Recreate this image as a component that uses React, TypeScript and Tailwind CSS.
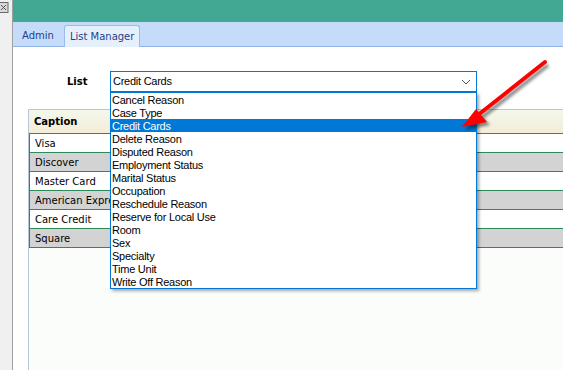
import React from "react";

const items = [
  "Cancel Reason",
  "Case Type",
  "Credit Cards",
  "Delete Reason",
  "Disputed Reason",
  "Employment Status",
  "Marital Status",
  "Occupation",
  "Reschedule Reason",
  "Reserve for Local Use",
  "Room",
  "Sex",
  "Specialty",
  "Time Unit",
  "Write Off Reason",
];

const rows = ["Visa", "Discover", "Master Card", "American Express", "Care Credit", "Square"];

export default function App() {
  return (
    <div className="relative flex w-[563px] h-[370px] overflow-hidden bg-white" style={{ fontFamily: '"DejaVu Sans", Verdana, sans-serif' }}>
      {/* left strip */}
      <div className="w-[13px] h-full bg-[#f0f0f0] border-r border-[#a0a0a0] shrink-0 relative">
        <svg width="9" height="12" viewBox="0 0 9 12" className="absolute left-0 top-[2px]">
          <rect x="-1" y="0.5" width="9" height="10" fill="#d8d8d8" stroke="#6a6a6a" />
          <path d="M1 3 L6 8 M6 3 L1 8" stroke="#555" strokeWidth="1" />
        </svg>
      </div>
      {/* main */}
      <div className="flex-1 flex flex-col min-w-0">
        <div className="h-[22px] bg-[#40a893] shrink-0" />
        <div className="h-[25px] bg-[#c4dcf9] border-b border-[#8fb4e4] shrink-0 flex items-end pl-[8px] gap-[9px] text-[10px] text-[#1e3e8c]">
          <div className="h-[21px] flex items-center px-[1px]">Admin</div>
          <div className="h-[22px] flex items-center px-[5px] bg-[#e6f0fc] border border-b-0 border-[#9bbce6] rounded-t-[3px] -mb-px">List Manager</div>
        </div>
        <div className="flex-1 relative flex flex-col">
          {/* list selector row */}
          <div className="flex items-center mt-[24px] shrink-0">
            <div className="w-[97px] pl-[54px] font-bold text-[10px] text-black">List</div>
            <div
              className="relative w-[367px] h-[21px] border border-[#0078d7] flex items-center pl-[2px] text-[11px] text-black tracking-[-0.25px]"
              style={{ fontFamily: '"Liberation Sans", Arial, sans-serif' }}
            >
              Credit Cards
              <svg width="10" height="6" viewBox="0 0 10 6" className="absolute right-[5px] top-[7px]">
                <path d="M1 1 L5 5 L9 1" fill="none" stroke="#555" strokeWidth="1" />
              </svg>
              {/* dropdown popup */}
              <div
                className="absolute left-[-1px] top-[20px] w-[367px] bg-white border border-[#0078d7] shadow-[2px_2px_3px_rgba(0,0,0,0.35)] z-20"
                style={{ fontFamily: '"Liberation Sans", Arial, sans-serif' }}
              >
                {items.map((it) => (
                  <div
                    key={it}
                    className={
                      "h-[13px] leading-[15px] overflow-hidden pl-[1px] text-[11px] tracking-[-0.25px] " +
                      (it === "Credit Cards" ? "bg-[#0078d7] text-white" : "text-black")
                    }
                  >
                    {it}
                  </div>
                ))}
              </div>
            </div>
          </div>
          {/* grid */}
          <div className="flex-1 ml-[15px] mt-[17px] border-l border-t border-[#b4c8dc] bg-[#fbfdfb] flex flex-col">
            <div className="h-[23px] shrink-0 flex items-center pl-[5px] font-bold text-[10px] text-black bg-gradient-to-b from-[#f2f8ec] to-[#f5ecd8]">
              Caption
            </div>
            {rows.map((r, i) => (
              <div
                key={r}
                className={
                  "shrink-0 flex items-center pl-[5px] text-[10px] text-black border-t border-l border-[#2e8b57] whitespace-nowrap overflow-hidden " +
                  (i % 2 === 1 ? "bg-[#d3d3d3] " : "bg-white ") +
                  (i === rows.length - 1 ? "h-[20px] border-b" : "h-[19px]")
                }
              >
                {r}
              </div>
            ))}
          </div>
        </div>
      </div>
      {/* red arrow annotation */}
      <svg width="563" height="370" className="absolute left-0 top-0 pointer-events-none z-30" viewBox="0 0 563 370">
        <defs>
          <filter id="sh" x="-20%" y="-20%" width="140%" height="140%">
            <feGaussianBlur stdDeviation="1.5" />
          </filter>
        </defs>
        <g transform="translate(3,3)" opacity="0.45" filter="url(#sh)">
          <line x1="545" y1="62" x2="478" y2="115" stroke="#000" strokeWidth="4" />
          <polygon points="462,127 476,110 487,122" fill="#000" />
        </g>
        <line x1="545" y1="62" x2="478" y2="115" stroke="#f00" strokeWidth="4" strokeLinecap="round" />
        <polygon points="462,127 476,109 487,122" fill="#f00" />
      </svg>
    </div>
  );
}
